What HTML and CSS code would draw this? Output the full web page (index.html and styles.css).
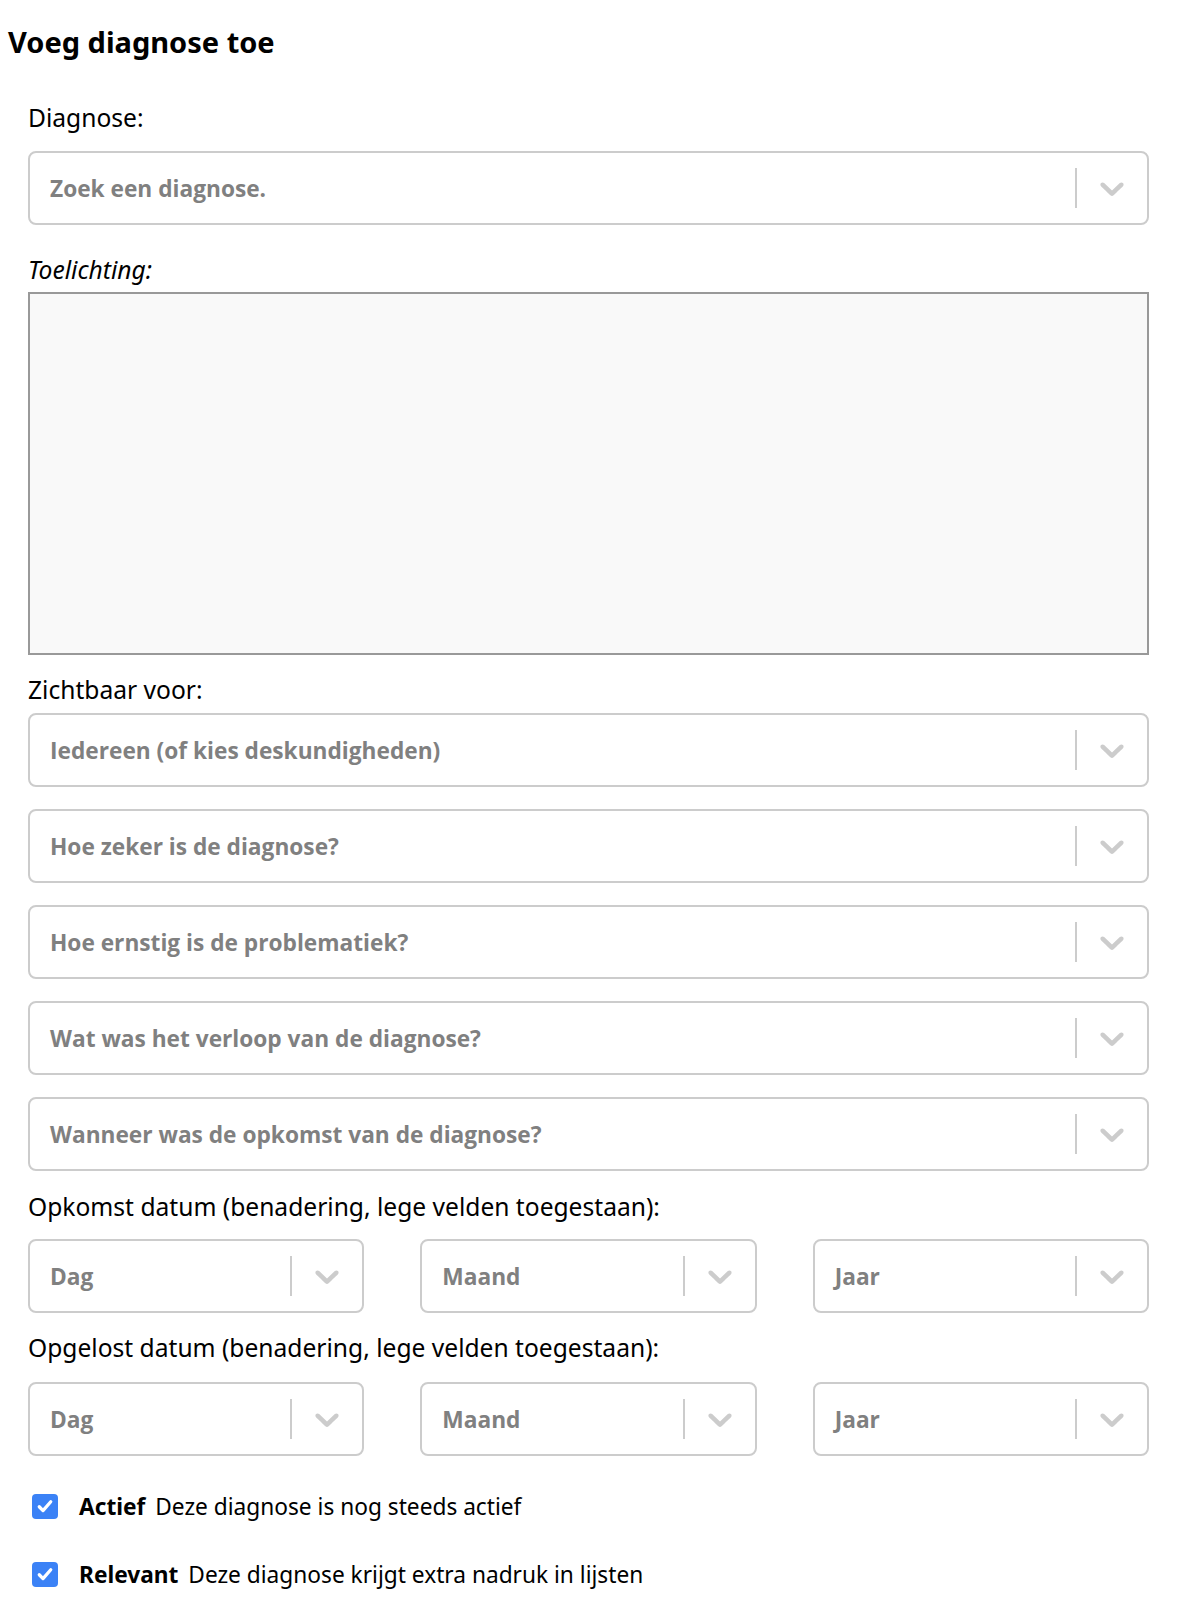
FILE: index.html
```html
<!DOCTYPE html>
<html lang="nl">
<head>
<meta charset="utf-8">
<title>Voeg diagnose toe</title>
<link rel="stylesheet" href="styles.css">
</head>
<body>
<div class="page">
  <h1 class="title">Voeg diagnose toe</h1>
  <form class="form">
    <label class="field-label label-diagnose">Diagnose:</label>
    <div class="select">
      <span class="placeholder">Zoek een diagnose.</span>
      <span class="sep"></span>
      <span class="indicator"><svg viewBox="0 0 20 20" width="40" height="40"><path d="M4.516 7.548c0.436-0.446 1.043-0.481 1.576 0l3.908 3.747 3.908-3.747c0.533-0.481 1.141-0.446 1.574 0 0.436 0.445 0.408 1.197 0 1.615-0.406 0.418-4.695 4.502-4.695 4.502-0.217 0.223-0.502 0.335-0.787 0.335s-0.57-0.112-0.789-0.335c0 0-4.287-4.084-4.695-4.502s-0.436-1.17 0-1.615z"/></svg></span>
    </div>

    <label class="field-label label-italic">Toelichting:</label>
    <textarea class="textarea"></textarea>

    <label class="field-label label-visible">Zichtbaar voor:</label>
    <div class="select-stack">
      <div class="select">
        <span class="placeholder">Iedereen (of kies deskundigheden)</span>
        <span class="sep"></span>
        <span class="indicator"><svg viewBox="0 0 20 20" width="40" height="40"><path d="M4.516 7.548c0.436-0.446 1.043-0.481 1.576 0l3.908 3.747 3.908-3.747c0.533-0.481 1.141-0.446 1.574 0 0.436 0.445 0.408 1.197 0 1.615-0.406 0.418-4.695 4.502-4.695 4.502-0.217 0.223-0.502 0.335-0.787 0.335s-0.57-0.112-0.789-0.335c0 0-4.287-4.084-4.695-4.502s-0.436-1.17 0-1.615z"/></svg></span>
      </div>
      <div class="select">
        <span class="placeholder">Hoe zeker is de diagnose?</span>
        <span class="sep"></span>
        <span class="indicator"><svg viewBox="0 0 20 20" width="40" height="40"><path d="M4.516 7.548c0.436-0.446 1.043-0.481 1.576 0l3.908 3.747 3.908-3.747c0.533-0.481 1.141-0.446 1.574 0 0.436 0.445 0.408 1.197 0 1.615-0.406 0.418-4.695 4.502-4.695 4.502-0.217 0.223-0.502 0.335-0.787 0.335s-0.57-0.112-0.789-0.335c0 0-4.287-4.084-4.695-4.502s-0.436-1.17 0-1.615z"/></svg></span>
      </div>
      <div class="select">
        <span class="placeholder">Hoe ernstig is de problematiek?</span>
        <span class="sep"></span>
        <span class="indicator"><svg viewBox="0 0 20 20" width="40" height="40"><path d="M4.516 7.548c0.436-0.446 1.043-0.481 1.576 0l3.908 3.747 3.908-3.747c0.533-0.481 1.141-0.446 1.574 0 0.436 0.445 0.408 1.197 0 1.615-0.406 0.418-4.695 4.502-4.695 4.502-0.217 0.223-0.502 0.335-0.787 0.335s-0.57-0.112-0.789-0.335c0 0-4.287-4.084-4.695-4.502s-0.436-1.17 0-1.615z"/></svg></span>
      </div>
      <div class="select">
        <span class="placeholder">Wat was het verloop van de diagnose?</span>
        <span class="sep"></span>
        <span class="indicator"><svg viewBox="0 0 20 20" width="40" height="40"><path d="M4.516 7.548c0.436-0.446 1.043-0.481 1.576 0l3.908 3.747 3.908-3.747c0.533-0.481 1.141-0.446 1.574 0 0.436 0.445 0.408 1.197 0 1.615-0.406 0.418-4.695 4.502-4.695 4.502-0.217 0.223-0.502 0.335-0.787 0.335s-0.57-0.112-0.789-0.335c0 0-4.287-4.084-4.695-4.502s-0.436-1.17 0-1.615z"/></svg></span>
      </div>
      <div class="select">
        <span class="placeholder">Wanneer was de opkomst van de diagnose?</span>
        <span class="sep"></span>
        <span class="indicator"><svg viewBox="0 0 20 20" width="40" height="40"><path d="M4.516 7.548c0.436-0.446 1.043-0.481 1.576 0l3.908 3.747 3.908-3.747c0.533-0.481 1.141-0.446 1.574 0 0.436 0.445 0.408 1.197 0 1.615-0.406 0.418-4.695 4.502-4.695 4.502-0.217 0.223-0.502 0.335-0.787 0.335s-0.57-0.112-0.789-0.335c0 0-4.287-4.084-4.695-4.502s-0.436-1.17 0-1.615z"/></svg></span>
      </div>
    </div>

    <label class="field-label label-date">Opkomst datum (benadering, lege velden toegestaan):</label>
    <div class="date-row">
      <div class="select date">
        <span class="placeholder">Dag</span>
        <span class="sep"></span>
        <span class="indicator"><svg viewBox="0 0 20 20" width="40" height="40"><path d="M4.516 7.548c0.436-0.446 1.043-0.481 1.576 0l3.908 3.747 3.908-3.747c0.533-0.481 1.141-0.446 1.574 0 0.436 0.445 0.408 1.197 0 1.615-0.406 0.418-4.695 4.502-4.695 4.502-0.217 0.223-0.502 0.335-0.787 0.335s-0.57-0.112-0.789-0.335c0 0-4.287-4.084-4.695-4.502s-0.436-1.17 0-1.615z"/></svg></span>
      </div>
      <div class="select date">
        <span class="placeholder">Maand</span>
        <span class="sep"></span>
        <span class="indicator"><svg viewBox="0 0 20 20" width="40" height="40"><path d="M4.516 7.548c0.436-0.446 1.043-0.481 1.576 0l3.908 3.747 3.908-3.747c0.533-0.481 1.141-0.446 1.574 0 0.436 0.445 0.408 1.197 0 1.615-0.406 0.418-4.695 4.502-4.695 4.502-0.217 0.223-0.502 0.335-0.787 0.335s-0.57-0.112-0.789-0.335c0 0-4.287-4.084-4.695-4.502s-0.436-1.17 0-1.615z"/></svg></span>
      </div>
      <div class="select date">
        <span class="placeholder">Jaar</span>
        <span class="sep"></span>
        <span class="indicator"><svg viewBox="0 0 20 20" width="40" height="40"><path d="M4.516 7.548c0.436-0.446 1.043-0.481 1.576 0l3.908 3.747 3.908-3.747c0.533-0.481 1.141-0.446 1.574 0 0.436 0.445 0.408 1.197 0 1.615-0.406 0.418-4.695 4.502-4.695 4.502-0.217 0.223-0.502 0.335-0.787 0.335s-0.57-0.112-0.789-0.335c0 0-4.287-4.084-4.695-4.502s-0.436-1.17 0-1.615z"/></svg></span>
      </div>
    </div>

    <label class="field-label label-date2">Opgelost datum (benadering, lege velden toegestaan):</label>
    <div class="date-row">
      <div class="select date">
        <span class="placeholder">Dag</span>
        <span class="sep"></span>
        <span class="indicator"><svg viewBox="0 0 20 20" width="40" height="40"><path d="M4.516 7.548c0.436-0.446 1.043-0.481 1.576 0l3.908 3.747 3.908-3.747c0.533-0.481 1.141-0.446 1.574 0 0.436 0.445 0.408 1.197 0 1.615-0.406 0.418-4.695 4.502-4.695 4.502-0.217 0.223-0.502 0.335-0.787 0.335s-0.57-0.112-0.789-0.335c0 0-4.287-4.084-4.695-4.502s-0.436-1.17 0-1.615z"/></svg></span>
      </div>
      <div class="select date">
        <span class="placeholder">Maand</span>
        <span class="sep"></span>
        <span class="indicator"><svg viewBox="0 0 20 20" width="40" height="40"><path d="M4.516 7.548c0.436-0.446 1.043-0.481 1.576 0l3.908 3.747 3.908-3.747c0.533-0.481 1.141-0.446 1.574 0 0.436 0.445 0.408 1.197 0 1.615-0.406 0.418-4.695 4.502-4.695 4.502-0.217 0.223-0.502 0.335-0.787 0.335s-0.57-0.112-0.789-0.335c0 0-4.287-4.084-4.695-4.502s-0.436-1.17 0-1.615z"/></svg></span>
      </div>
      <div class="select date">
        <span class="placeholder">Jaar</span>
        <span class="sep"></span>
        <span class="indicator"><svg viewBox="0 0 20 20" width="40" height="40"><path d="M4.516 7.548c0.436-0.446 1.043-0.481 1.576 0l3.908 3.747 3.908-3.747c0.533-0.481 1.141-0.446 1.574 0 0.436 0.445 0.408 1.197 0 1.615-0.406 0.418-4.695 4.502-4.695 4.502-0.217 0.223-0.502 0.335-0.787 0.335s-0.57-0.112-0.789-0.335c0 0-4.287-4.084-4.695-4.502s-0.436-1.17 0-1.615z"/></svg></span>
      </div>
    </div>

    <div class="checks">
      <label class="check">
        <span class="box"><svg viewBox="0 0 16 16" width="20" height="20"><path d="M3.4 8.6l3 3.1L12.6 4.6" fill="none" stroke="#fff" stroke-width="2.6" stroke-linecap="round" stroke-linejoin="round"/></svg></span>
        <span class="check-text"><strong>Actief</strong> Deze diagnose is nog steeds actief</span>
      </label>
      <label class="check">
        <span class="box"><svg viewBox="0 0 16 16" width="20" height="20"><path d="M3.4 8.6l3 3.1L12.6 4.6" fill="none" stroke="#fff" stroke-width="2.6" stroke-linecap="round" stroke-linejoin="round"/></svg></span>
        <span class="check-text"><strong>Relevant</strong> Deze diagnose krijgt extra nadruk in lijsten</span>
      </label>
    </div>
  </form>
</div>
</body>
</html>
```

FILE: styles.css
```css
html, body {
  margin: 0;
  padding: 0;
  background: #ffffff;
}

body {
  font-family: "Noto Sans", "Liberation Sans", sans-serif;
  color: #000000;
}

.page {
  padding: 0 33px 40px 28px;
}

.title {
  margin: 24px 0 0 -20px;
  font-size: 29px;
  line-height: 36px;
  font-weight: 700;
}

.form {
  display: flex;
  flex-direction: column;
}

.field-label {
  display: block;
  font-size: 24.6px;
  line-height: 36px;
}

.label-diagnose {
  margin-top: 40px;
  margin-bottom: 15px;
}

.label-italic {
  font-style: italic;
  margin-top: 27px;
  margin-bottom: 4px;
}

.label-visible {
  margin-top: 17px;
  margin-bottom: 5px;
}

.label-date {
  margin-top: 18px;
  margin-bottom: 14px;
}

.label-date2 {
  margin-top: 17px;
  margin-bottom: 16px;
}

.select {
  box-sizing: border-box;
  height: 74px;
  border: 2px solid #cccccc;
  border-radius: 8px;
  background: #ffffff;
  display: flex;
  align-items: center;
}

.placeholder {
  flex: 1;
  padding-left: 20px;
  font-family: "Open Sans", "Liberation Sans", sans-serif;
  font-weight: 700;
  font-size: 22.7px;
  color: #808080;
  white-space: nowrap;
  overflow: hidden;
}

.sep {
  width: 2px;
  height: 40px;
  background: #cccccc;
}

.indicator {
  width: 70px;
  display: flex;
  align-items: center;
  justify-content: center;
}

.indicator svg {
  fill: #cccccc;
  display: block;
}

.textarea {
  display: block;
  box-sizing: border-box;
  width: 100%;
  height: 363px;
  border: 2px solid #999999;
  background: #f9f9f9;
  resize: none;
  margin: 0;
}

.select-stack {
  display: flex;
  flex-direction: column;
  gap: 22px;
}

.date-row {
  display: flex;
  justify-content: space-between;
}

.select.date {
  width: 30%;
}

.checks {
  margin-top: 32px;
  display: flex;
  flex-direction: column;
  gap: 32px;
}

.check {
  display: flex;
  align-items: center;
  height: 36px;
  font-size: 22.7px;
}

.box {
  box-sizing: border-box;
  width: 26px;
  height: 25px;
  margin-left: 4px;
  margin-right: 21px;
  background: #3b82f6;
  border-radius: 4px;
  display: flex;
  align-items: center;
  justify-content: center;
}

.box svg {
  display: block;
}

.check-text strong {
  font-weight: 700;
  margin-right: 4px;
}
```
